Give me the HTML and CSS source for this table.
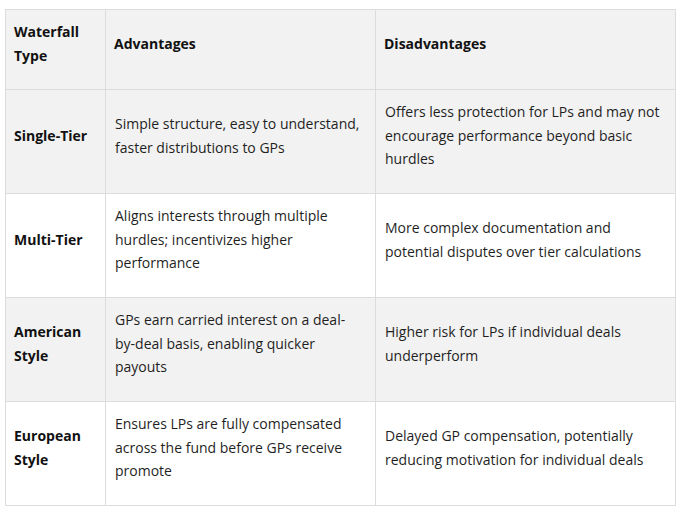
FILE: index.html
```html
<!DOCTYPE html>
<html lang="en">
<head>
<meta charset="utf-8">
<link rel="stylesheet" href="styles.css">
</head>
<body>
<table class="wf">
  <colgroup>
    <col class="c1"><col class="c2"><col class="c3">
  </colgroup>
  <thead>
    <tr class="shade"><th>Waterfall Type</th><th>Advantages</th><th>Disadvantages</th></tr>
  </thead>
  <tbody>
    <tr class="shade"><th>Single-Tier</th><td>Simple structure, easy to understand, faster distributions to GPs</td><td>Offers less protection for LPs and may not encourage performance beyond basic hurdles</td></tr>
    <tr><th>Multi-Tier</th><td>Aligns interests through multiple hurdles; incentivizes higher performance</td><td>More complex documentation and potential disputes over tier calculations</td></tr>
    <tr class="shade"><th>American Style</th><td>GPs earn carried interest on a deal-by-deal basis, enabling quicker payouts</td><td>Higher risk for LPs if individual deals underperform</td></tr>
    <tr><th>European Style</th><td>Ensures LPs are fully compensated across the fund before GPs receive promote</td><td>Delayed GP compensation, potentially reducing motivation for individual deals</td></tr>
  </tbody>
</table>
</body>
</html>
```
FILE: styles.css
```css
html, body { background: #fff; }
body {
  margin: 0;
  padding: 9px 7px 0 5px;
  font-family: "Open Sans", "Noto Sans", sans-serif;
  font-size: 14px;
  line-height: 23.5px;
  color: #1f1f1f;
}
.wf {
  border-collapse: collapse;
  table-layout: fixed;
  width: 670px;
}
.c1 { width: 100px; }
.c2 { width: 270px; }
.c3 { width: 300px; }
.wf th, .wf td {
  border: 1px solid #dcdcdc;
  padding: 9px 8px 21px 8px;
  text-align: left;
  vertical-align: middle;
}
.wf td { padding-left: 9px; padding-right: 14px; }
.wf th { font-weight: 700; color: #111; }
.shade { background: #f2f2f2; }
.wf tbody tr { height: 104px; }
.wf thead tr { height: 80px; }
```
